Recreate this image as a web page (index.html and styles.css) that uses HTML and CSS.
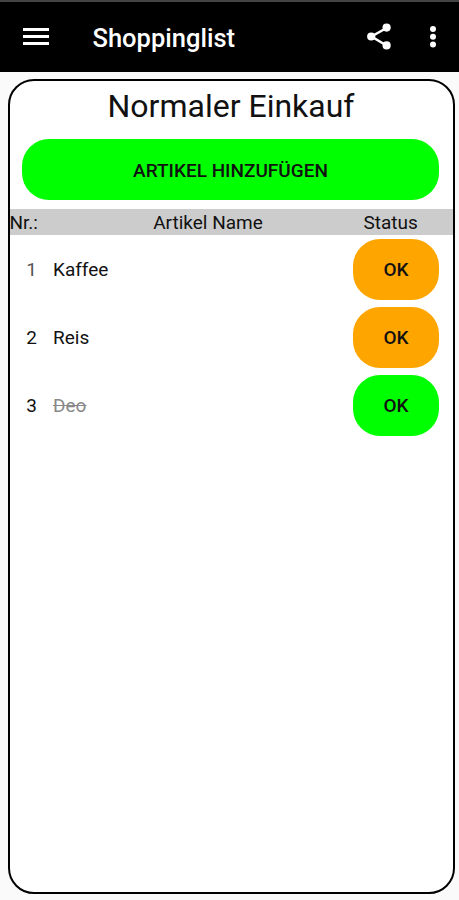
FILE: index.html
```html
<!DOCTYPE html>
<html lang="de">
<head>
    <meta charset="UTF-8">
    <meta name="viewport" content="width=device-width, initial-scale=1.0">
    <title>Shoppinglist</title>
    <link rel="stylesheet" href="styles.css">
</head>
<body>

    <header class="toolbar">
        <svg class="menu-icon" viewBox="0 0 26 18">
            <path d="M0 0h26v3H0zM0 7h26v3H0zM0 14h26v3H0z"/>
        </svg>
        <h1 class="app-title">Shoppinglist</h1>
        <svg class="share-icon" viewBox="0 0 24 27">
            <path d="M19.5 5L4.5 13.5L19.5 22.5" fill="none" stroke="#fff" stroke-width="2.5"/>
            <circle cx="4.2" cy="13.5" r="4.1"/>
            <circle cx="19.6" cy="4.6" r="4.1"/>
            <circle cx="19.6" cy="22.4" r="4.1"/>
        </svg>
        <svg class="more-icon" viewBox="0 0 6 22">
            <circle cx="3" cy="3" r="3"/>
            <circle cx="3" cy="10.7" r="3"/>
            <circle cx="3" cy="18.4" r="3"/>
        </svg>
    </header>

    <main class="card">
        <h2 class="list-title">Normaler Einkauf</h2>
        <button class="add-button">ARTIKEL HINZUFÜGEN</button>

        <!-- Table Header -->
        <div class="list-header">
            <span class="col-nr">Nr.:</span>
            <span class="col-name">Artikel Name</span>
            <span class="col-status">Status</span>
        </div>

        <!-- Items -->
        <div class="items">
            <div class="item">
                <span class="nr first">1</span>
                <span class="name">Kaffee</span>
                <button class="status">OK</button>
            </div>
            <div class="item">
                <span class="nr">2</span>
                <span class="name">Reis</span>
                <button class="status">OK</button>
            </div>
            <div class="item">
                <span class="nr">3</span>
                <span class="name done">Deo</span>
                <button class="status bought">OK</button>
            </div>
        </div>
    </main>

</body>
</html>
```
FILE: styles.css
```css
* {
    margin: 0;
    padding: 0;
    box-sizing: border-box;
}

body {
    height: 100vh;
    background: #fafafa;
    color: #111;
    font-family: Roboto, sans-serif;
    font-size: 19px;
    overflow: hidden;
}

button {
    border: none;
    color: #111;
    font-family: inherit;
    font-weight: 500;
    cursor: pointer;
}

/* Toolbar */
.toolbar {
    display: flex;
    align-items: center;
    height: 72px;
    padding: 0 23px 0 23px;
    background: #000;
    border-top: 2px solid #444;
    fill: #fff;
}

.menu-icon {
    width: 26px;
    height: 18px;
}

.app-title {
    flex: 1;
    margin-left: 43.5px;
    padding-top: 2px;
    color: #fff;
    font-size: 25.5px;
    font-weight: 500;
    line-height: 30px;
}

.share-icon {
    width: 24px;
    height: 27px;
    margin-right: 39px;
    margin-bottom: 1px;
}

.more-icon {
    width: 6px;
    height: 22px;
}

/* Card */
.card {
    width: 447px;
    height: 814.5px;
    margin: 7px 0 0 7.5px;
    background: #fff;
    border: 2px solid #000;
    border-radius: 26px;
}

.list-title {
    height: 50px;
    padding-top: 5px;
    font-size: 32px;
    font-weight: 400;
    line-height: 40px;
    text-align: center;
}

.add-button {
    display: block;
    width: 417px;
    height: 61px;
    margin: 8px 0 9px 12.5px;
    padding-top: 1px;
    background: #0f0;
    border-radius: 27px;
    font-size: 19px;
}

.list-header {
    display: flex;
    height: 26px;
    background: #ccc;
    line-height: 27px;
}

.col-nr {
    width: 43px;
}

.col-name {
    flex: 1;
    text-align: center;
}

.col-status {
    width: 89px;
}

/* Items */
.items {
    display: flex;
    flex-direction: column;
    gap: 7.2px;
    padding: 4px 13.5px 0 0;
}

.item {
    display: flex;
    align-items: center;
    height: 61px;
}

.nr {
    width: 27.5px;
    text-align: right;
}

.nr.first {
    color: #555;
}

.name {
    flex: 1;
    margin-left: 16px;
}

.name.done {
    color: #888;
    text-decoration: line-through;
}

.status {
    width: 86px;
    height: 61px;
    background: #ffa500;
    border-radius: 27px;
    font-size: 19px;
}

.status.bought {
    background: #0f0;
}
```
